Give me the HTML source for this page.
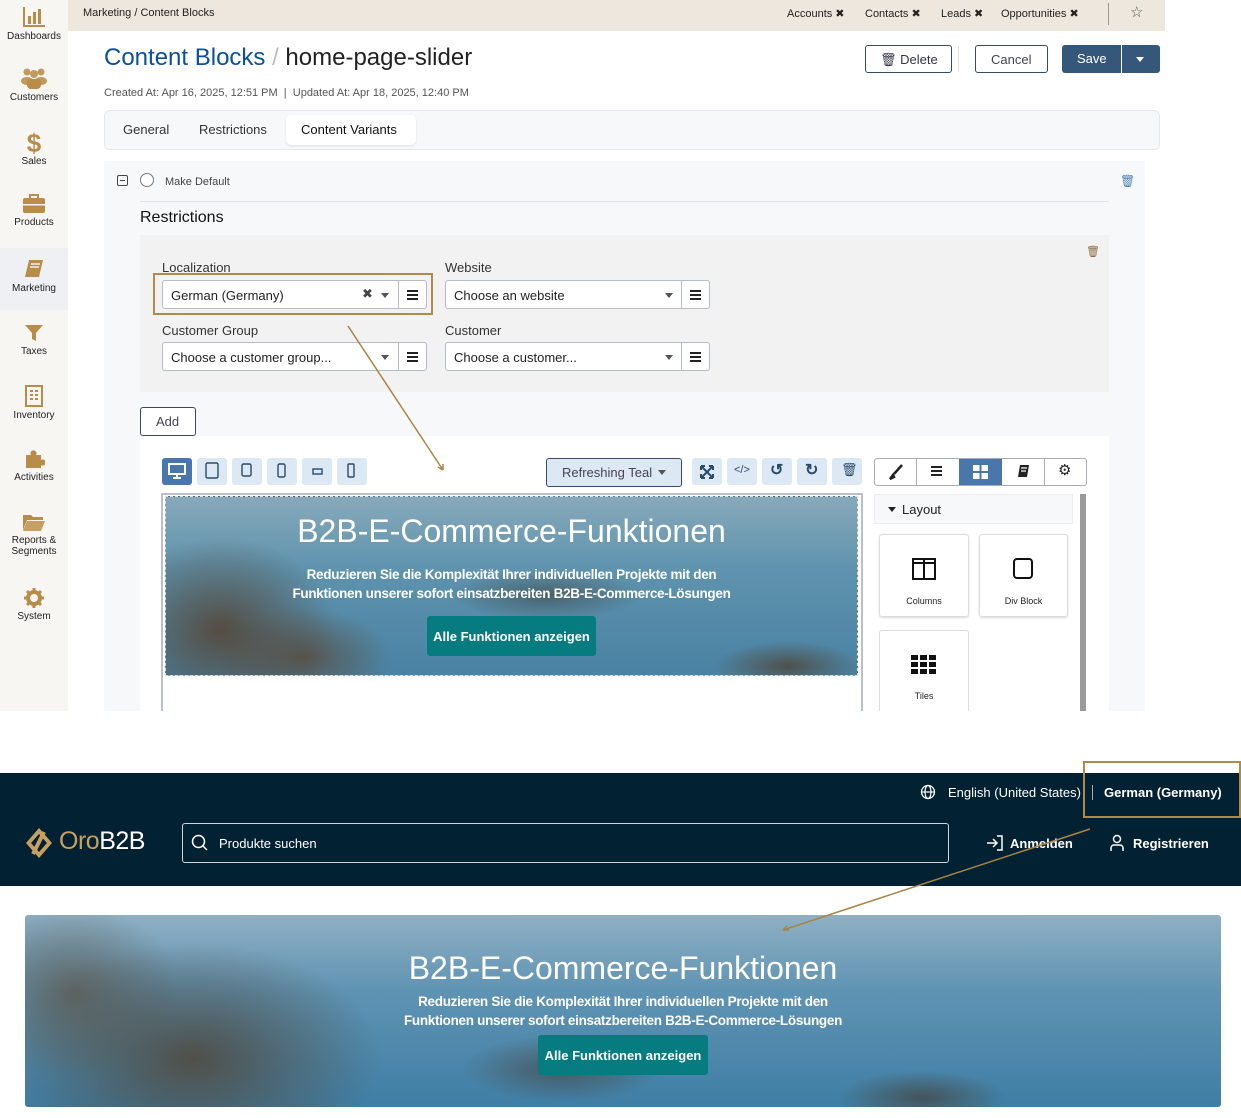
<!DOCTYPE html>
<html><head><meta charset="utf-8"><style>
*{box-sizing:border-box;margin:0;padding:0}
body{width:1241px;height:1118px;position:relative;background:#fff;font-family:"Liberation Sans",sans-serif;color:#222;overflow:hidden}
.a{position:absolute}
.side{left:0;top:0;width:68px;height:711px;background:#f8f6f3}
.si{position:absolute;left:0;width:68px;text-align:center;font-size:10px;color:#222}
.si svg{display:block;margin:0 auto 3px}
.sel{border:1px solid #b4bcc8;border-radius:3px;background:#fff;height:29px;font-size:13px;color:#222}
.sel .t{position:absolute;left:8px;top:7px}
.sel .m{position:absolute;right:0;top:0;width:28px;height:27px;border-left:1px solid #b4bcc8}
.ham{position:absolute;left:8px;width:11px;height:2px;background:#222}
.tri{position:absolute;width:0;height:0;border-left:4px solid transparent;border-right:4px solid transparent;border-top:5px solid #555}
.tb{position:absolute;top:458px;width:30px;height:27px;background:#dde8f5;border-radius:3px}
.sea{background:
radial-gradient(ellipse 22% 70% at 8% 75%,rgba(85,70,55,.9),transparent 75%),
radial-gradient(ellipse 18% 40% at 20% 90%,rgba(90,75,60,.8),transparent 70%),
radial-gradient(ellipse 20% 20% at 55% 55%,rgba(60,60,55,.55),transparent 70%),
radial-gradient(ellipse 15% 20% at 90% 95%,rgba(80,60,40,.7),transparent 70%),
linear-gradient(180deg,#87a9ba 0%,#5f93ae 40%,#4a82a3 100%)}
.cta{position:absolute;background:#067b80;color:#fff;font-weight:bold;font-size:13px;border-radius:3px;text-align:center}
.h1{font-size:32px;color:#fff;line-height:36px;text-align:center}
.sub{text-align:center;font-size:13.5px;color:#fff;font-weight:bold;line-height:19px;letter-spacing:-.3px}
</style></head><body>
<div class="a side"></div>
<div class="a" style="left:0;top:248px;width:68px;height:62px;background:#eef0f3"></div>
<div class="si" style="top:6px"><svg width="24" height="22" viewBox="0 0 24 22"><path d="M2 1v19h21" stroke="#b98c4a" stroke-width="2" fill="none"/><rect x="6" y="10" width="3" height="8" fill="#b98c4a"/><rect x="11" y="6" width="3" height="12" fill="#b98c4a"/><rect x="16" y="3" width="3" height="15" fill="#b98c4a"/></svg>Dashboards</div>
<div class="si" style="top:67px"><svg width="26" height="22" viewBox="0 0 26 22"><circle cx="6" cy="5" r="3.5" fill="#c19a5c"/><circle cx="20" cy="5" r="3.5" fill="#c19a5c"/><circle cx="13" cy="7" r="4" fill="#c19a5c"/><ellipse cx="6" cy="14" rx="6" ry="4" fill="#c19a5c"/><ellipse cx="20" cy="14" rx="6" ry="4" fill="#c19a5c"/><rect x="6" y="12" width="14" height="10" rx="4" fill="#b98c4a"/></svg>Customers</div>
<div class="si" style="top:130px"><div style="font-size:26px;color:#b98c4a;font-weight:bold;line-height:26px">$</div>Sales</div>
<div class="si" style="top:194px"><svg width="24" height="20" viewBox="0 0 24 20"><rect x="1" y="4" width="22" height="15" rx="2" fill="#b98c4a"/><rect x="8" y="1" width="8" height="4" fill="none" stroke="#b98c4a" stroke-width="2"/><rect x="1" y="10" width="22" height="1.5" fill="#f8f6f3"/></svg>Products</div>
<div class="si" style="top:258px"><svg width="22" height="22" viewBox="0 0 22 22"><path d="M6 2h14l-4 17H2z" fill="#b98c4a"/><path d="M8 6h9M7 9h9" stroke="#eef0f3" stroke-width="1.5"/></svg>Marketing</div>
<div class="si" style="top:323px"><svg width="20" height="20" viewBox="0 0 20 20"><path d="M1 2h18l-7 8v8l-4-2v-6z" fill="#b98c4a"/></svg>Taxes</div>
<div class="si" style="top:385px"><svg width="20" height="22" viewBox="0 0 20 22"><rect x="2" y="1" width="16" height="20" fill="none" stroke="#b98c4a" stroke-width="2"/><path d="M6 6h3M11 6h3M6 10h3M11 10h3M6 14h3M11 14h3" stroke="#b98c4a" stroke-width="2"/></svg>Inventory</div>
<div class="si" style="top:447px"><svg width="22" height="22" viewBox="0 0 22 22"><path d="M3 8h5a3 3 0 1 1 5 0h5v5a3 3 0 1 1 0 5v3H3z" fill="#b98c4a"/></svg>Activities</div>
<div class="si" style="top:512px"><svg width="24" height="20" viewBox="0 0 24 20"><path d="M1 3h8l2 2h10v3H5L1 18z" fill="#b98c4a"/><path d="M5 9h18l-4 10H1z" fill="#c7a060"/></svg>Reports &amp;<br>Segments</div>
<div class="si" style="top:588px"><svg width="20" height="20" viewBox="0 0 20 20"><circle cx="10" cy="10" r="6" fill="none" stroke="#b98c4a" stroke-width="4"/><path d="M10 0v5M10 15v5M0 10h5M15 10h5M3 3l3 3M14 14l3 3M3 17l3-3M14 6l3-3" stroke="#b98c4a" stroke-width="3"/></svg>System</div>

<div class="a" style="left:68px;top:0;width:1097px;height:31px;background:#ede7dd"></div>
<div class="a" style="left:83px;top:7px;font-size:11px">Marketing / Content Blocks</div>
<div class="a" style="left:787px;top:7px;font-size:11px">Accounts ✖</div>
<div class="a" style="left:865px;top:7px;font-size:11px">Contacts ✖</div>
<div class="a" style="left:941px;top:7px;font-size:11px">Leads ✖</div>
<div class="a" style="left:1001px;top:7px;font-size:11px">Opportunities ✖</div>
<div class="a" style="left:1108px;top:3px;width:1px;height:22px;background:#999"></div>
<div class="a" style="left:1130px;top:3px;font-size:15px;color:#555">☆</div>
<div class="a" style="left:68px;top:31px;width:1097px;height:680px;background:#fff"></div>

<div class="a" style="left:104px;top:44px;font-size:24px"><span style="color:#0b4f9e">Content Blocks</span> <span style="color:#bbb">/</span> home-page-slider</div>
<div class="a" style="left:104px;top:87px;font-size:11px;color:#555">Created At: Apr 16, 2025, 12:51 PM &nbsp;| &nbsp;Updated At: Apr 18, 2025, 12:40 PM</div>
<div class="a" style="left:865px;top:45px;width:87px;height:28px;border:1px solid #3a4a5a;border-radius:3px;font-size:13px;padding:6px 0 0 14px;color:#334">🗑︎ Delete</div>
<div class="a" style="left:958px;top:46px;width:1px;height:26px;background:#ddd"></div>
<div class="a" style="left:975px;top:45px;width:73px;height:28px;border:1px solid #3a4a5a;border-radius:3px;font-size:13px;padding:6px 0 0 15px;color:#445">Cancel</div>
<div class="a" style="left:1062px;top:45px;width:98px;height:28px;background:#35577a;border-radius:3px;color:#fff;font-size:13px;padding:6px 0 0 15px">Save</div>
<div class="a" style="left:1121px;top:45px;width:1px;height:28px;background:#fff"></div>
<div class="tri" style="left:1136px;top:57px;border-top-color:#fff"></div>

<div class="a" style="left:104px;top:110px;width:1056px;height:40px;background:#f7f8fa;border:1px solid #e6e8ec;border-radius:6px"></div>
<div class="a" style="left:123px;top:122px;font-size:13px;color:#333">General</div>
<div class="a" style="left:199px;top:122px;font-size:13px;color:#333">Restrictions</div>
<div class="a" style="left:286px;top:115px;width:130px;height:30px;background:#fff;border-radius:5px;box-shadow:0 1px 2px rgba(0,0,0,.1);font-size:13px;padding:7px 0 0 15px;color:#111">Content Variants</div>

<div class="a" style="left:104px;top:161px;width:1041px;height:550px;background:#f7f8fa"></div>
<div class="a" style="left:117px;top:175px;width:11px;height:11px;border:1px solid #444;border-radius:2px"><div style="position:absolute;left:2px;top:4px;width:5px;height:1px;background:#444"></div></div>
<div class="a" style="left:140px;top:173px;width:14px;height:14px;border:1px solid #777;border-radius:50%;background:#fff"></div>
<div class="a" style="left:165px;top:176px;font-size:11px;color:#444">Make Default</div>
<div class="a" style="left:1120px;top:174px;font-size:12px;color:#4a7fb5">🗑︎</div>
<div class="a" style="left:140px;top:201px;width:969px;height:1px;background:#dfe2e6"></div>
<div class="a" style="left:140px;top:209px;font-size:16px;color:#111">Restrictions</div>
<div class="a" style="left:140px;top:235px;width:969px;height:157px;background:#f2f2f2"></div>
<div class="a" style="left:1086px;top:245px;font-size:11px;color:#8a6a3a">🗑︎</div>

<div class="a" style="left:162px;top:260px;font-size:13px;color:#333">Localization</div>
<div class="a" style="left:445px;top:260px;font-size:13px;color:#333">Website</div>
<div class="a" style="left:162px;top:323px;font-size:13px;color:#333">Customer Group</div>
<div class="a" style="left:445px;top:323px;font-size:13px;color:#333">Customer</div>
<div class="a" style="left:153px;top:273px;width:280px;height:42px;border:2px solid #b08a4a"></div>

<div class="a sel" style="left:162px;top:280px;width:265px"><span class="t">German (Germany)</span><span class="a" style="left:199px;top:5px;font-size:13px;color:#444">✖</span><div class="tri" style="left:218px;top:12px"></div><div class="m"><div class="ham" style="top:9px"></div><div class="ham" style="top:13px"></div><div class="ham" style="top:17px"></div></div></div>
<div class="a sel" style="left:445px;top:280px;width:265px"><span class="t">Choose an website</span><div class="tri" style="left:219px;top:12px"></div><div class="m"><div class="ham" style="top:9px"></div><div class="ham" style="top:13px"></div><div class="ham" style="top:17px"></div></div></div>
<div class="a sel" style="left:162px;top:342px;width:265px"><span class="t">Choose a customer group...</span><div class="tri" style="left:218px;top:12px"></div><div class="m"><div class="ham" style="top:9px"></div><div class="ham" style="top:13px"></div><div class="ham" style="top:17px"></div></div></div>
<div class="a sel" style="left:445px;top:342px;width:265px"><span class="t">Choose a customer...</span><div class="tri" style="left:219px;top:12px"></div><div class="m"><div class="ham" style="top:9px"></div><div class="ham" style="top:13px"></div><div class="ham" style="top:17px"></div></div></div>

<div class="a" style="left:140px;top:407px;width:56px;height:29px;border:1px solid #3a4a5a;border-radius:3px;background:#fff;font-size:13px;padding:6px 0 0 15px;color:#445">Add</div>

<div class="a" style="left:140px;top:436px;width:969px;height:275px;background:#fff"></div>
<div class="tb" style="left:162px;background:#4a77ab"></div>
<div class="tb" style="left:197px"></div><div class="tb" style="left:232px"></div><div class="tb" style="left:267px"></div><div class="tb" style="left:302px"></div><div class="tb" style="left:337px"></div>
<svg class="a" style="left:168px;top:463px" width="18" height="16"><rect x="1" y="1" width="16" height="10" fill="none" stroke="#fff" stroke-width="2"/><path d="M9 11v3M5 15h8" stroke="#fff" stroke-width="2"/></svg>
<svg class="a" style="left:205px;top:462px" width="14" height="18"><rect x="1" y="1" width="12" height="15" rx="1.5" fill="none" stroke="#2a4a6a" stroke-width="1.4"/></svg>
<svg class="a" style="left:241px;top:463px" width="12" height="16"><rect x="1" y="1" width="9" height="12" rx="1.5" fill="none" stroke="#2a4a6a" stroke-width="1.4"/></svg>
<svg class="a" style="left:277px;top:463px" width="10" height="16"><rect x="1" y="1" width="7" height="13" rx="1.5" fill="none" stroke="#2a4a6a" stroke-width="1.4"/></svg>
<svg class="a" style="left:312px;top:468px" width="12" height="8"><rect x="1" y="1" width="9" height="5" fill="none" stroke="#2a4a6a" stroke-width="1.4"/></svg>
<svg class="a" style="left:347px;top:463px" width="10" height="16"><rect x="1" y="1" width="6" height="13" rx="1" fill="none" stroke="#2a4a6a" stroke-width="1.4"/></svg>

<div class="a" style="left:546px;top:458px;width:136px;height:29px;background:#dde8f5;border:1px solid #3a4a6a;border-radius:3px;font-size:13px;padding:6px 0 0 15px;color:#445">Refreshing Teal</div>
<div class="tri" style="left:658px;top:470px"></div>
<div class="tb" style="left:692px"></div><div class="tb" style="left:727px"></div><div class="tb" style="left:762px"></div><div class="tb" style="left:797px"></div><div class="tb" style="left:832px"></div>
<svg class="a" style="left:699px;top:464px" width="16" height="16"><path d="M2 2l12 12M14 2L2 14M2 2h4M2 2v4M14 2h-4M14 2v4M2 14h4M2 14v-4M14 14h-4M14 14v-4" stroke="#2a4a6a" stroke-width="2"/></svg>
<div class="a" style="left:734px;top:464px;font-size:11px;color:#2a4a6a">&lt;/&gt;</div>
<div class="a" style="left:770px;top:460px;font-size:16px;color:#2a4a6a;font-weight:bold">↺</div>
<div class="a" style="left:805px;top:460px;font-size:16px;color:#2a4a6a;font-weight:bold">↻</div>
<div class="a" style="left:841px;top:462px;font-size:13px;color:#2a4a6a">🗑︎</div>

<div class="a" style="left:874px;top:458px;width:213px;height:28px;border:1px solid #aab;border-radius:3px;background:#fff"></div>
<div class="a" style="left:959px;top:459px;width:43px;height:26px;background:#4a77ab"></div>
<div class="a" style="left:916px;top:459px;width:1px;height:26px;background:#aab"></div>
<div class="a" style="left:1044px;top:459px;width:1px;height:26px;background:#aab"></div>
<svg class="a" style="left:888px;top:464px" width="16" height="16"><path d="M14 1L6 10M5 11l-3 4 4-2z" stroke="#222" stroke-width="2.5"/></svg>
<div class="a" style="left:931px;top:461px;width:13px"><div class="ham" style="left:0;top:5px"></div><div class="ham" style="left:0;top:9px"></div><div class="ham" style="left:0;top:13px"></div></div>
<svg class="a" style="left:973px;top:465px" width="15" height="14"><rect x="0" y="0" width="15" height="14" fill="#fff"/><path d="M7.5 0v14M0 7h15" stroke="#4a77ab" stroke-width="2"/></svg>
<svg class="a" style="left:1016px;top:464px" width="14" height="15"><path d="M4 1h9l-2 12H2z" fill="#222"/><path d="M5 4h6M5 7h5" stroke="#fff" stroke-width="1.2"/></svg>
<div class="a" style="left:1058px;top:461px;font-size:15px;color:#222">⚙︎</div>

<div class="a" style="left:874px;top:494px;width:199px;height:30px;background:#f7f8fa;border:1px solid #eee"></div>
<div class="tri" style="left:888px;top:507px;border-top-color:#222"></div>
<div class="a" style="left:902px;top:502px;font-size:13px;color:#222">Layout</div>
<div class="a" style="left:1080px;top:494px;width:6px;height:217px;background:#9a9a9a"></div>
<div class="a" style="left:879px;top:534px;width:90px;height:83px;border:1px solid #ddd;border-radius:3px;box-shadow:0 1px 2px rgba(0,0,0,.15)"></div>
<div class="a" style="left:979px;top:534px;width:89px;height:83px;border:1px solid #ddd;border-radius:3px;box-shadow:0 1px 2px rgba(0,0,0,.15)"></div>
<div class="a" style="left:879px;top:630px;width:90px;height:81px;border:1px solid #ddd;border-bottom:none;border-radius:3px 3px 0 0"></div>
<svg class="a" style="left:912px;top:558px" width="24" height="22"><rect x="1" y="1" width="22" height="20" fill="none" stroke="#111" stroke-width="2"/><path d="M12 1v20M1 5h22" stroke="#111" stroke-width="2"/></svg>
<svg class="a" style="left:1013px;top:558px" width="20" height="22"><rect x="1" y="1" width="18" height="19" rx="3" fill="none" stroke="#111" stroke-width="2"/></svg>
<svg class="a" style="left:911px;top:655px" width="26" height="20"><g fill="#111"><rect x="0" y="0" width="7" height="5"/><rect x="9" y="0" width="7" height="5"/><rect x="18" y="0" width="7" height="5"/><rect x="0" y="7" width="7" height="5"/><rect x="9" y="7" width="7" height="5"/><rect x="18" y="7" width="7" height="5"/><rect x="0" y="14" width="7" height="5"/><rect x="9" y="14" width="7" height="5"/><rect x="18" y="14" width="7" height="5"/></g></svg>
<div class="a" style="left:879px;top:596px;width:90px;text-align:center;font-size:9px">Columns</div>
<div class="a" style="left:979px;top:596px;width:89px;text-align:center;font-size:9px">Div Block</div>
<div class="a" style="left:879px;top:691px;width:90px;text-align:center;font-size:9px">Tiles</div>

<div class="a" style="left:161px;top:493px;width:702px;height:218px;border:2px solid #b9c0cc;border-bottom:none"></div>
<div class="a sea" style="left:165px;top:496px;width:693px;height:180px;border:1px dashed #ddd"></div>
<div class="a h1" style="left:165px;top:513px;width:693px">B2B-E-Commerce-Funktionen</div>
<div class="a sub" style="left:165px;top:565px;width:693px">Reduzieren Sie die Komplexität Ihrer individuellen Projekte mit den<br>Funktionen unserer sofort einsatzbereiten B2B-E-Commerce-Lösungen</div>
<div class="cta" style="left:427px;top:616px;width:169px;height:40px;padding-top:13px">Alle Funktionen anzeigen</div>

<svg class="a" style="left:0;top:0" width="1241" height="1118"><path d="M348 326L443 470" stroke="#a88445" stroke-width="1.5"/><path d="M443 470l-5-3M443 470l0-6" stroke="#a88445" stroke-width="1.5"/></svg>

<div class="a" style="left:0;top:773px;width:1241px;height:113px;background:#022133"></div>
<svg class="a" style="left:920px;top:784px" width="16" height="16"><circle cx="8" cy="8" r="6.5" fill="none" stroke="#fff" stroke-width="1.3"/><ellipse cx="8" cy="8" rx="3" ry="6.5" fill="none" stroke="#fff" stroke-width="1.2"/><path d="M1.5 8h13" stroke="#fff" stroke-width="1.2"/></svg>
<div class="a" style="left:948px;top:785px;font-size:13px;color:#fff">English (United States)</div>
<div class="a" style="left:1092px;top:785px;width:1px;height:15px;background:#aaa"></div>
<div class="a" style="left:1104px;top:785px;font-size:13px;color:#fff;font-weight:bold">German (Germany)</div>
<div class="a" style="left:1083px;top:761px;width:158px;height:57px;border:2px solid #b08a4a"></div>
<svg class="a" style="left:24px;top:827px" width="30" height="32"><path d="M15 1L28 16 15 31 2 16z" fill="#c7a060"/><path d="M15 7L23 16 15 25 7 16z" fill="#022133"/><path d="M20 5L9 27" stroke="#c7a060" stroke-width="4"/></svg>
<div class="a" style="left:59px;top:827px;font-size:25px;color:#c7a060;letter-spacing:-.5px">Oro<span style="color:#fff">B2B</span></div>
<div class="a" style="left:182px;top:823px;width:767px;height:40px;border:1px solid #cfd6dc;border-radius:3px"></div>
<svg class="a" style="left:191px;top:834px" width="18" height="18"><circle cx="7.5" cy="7.5" r="6" fill="none" stroke="#fff" stroke-width="1.5"/><path d="M12 12l4 4" stroke="#fff" stroke-width="1.5"/></svg>
<div class="a" style="left:219px;top:836px;font-size:13px;color:#fff">Produkte suchen</div>
<svg class="a" style="left:986px;top:834px" width="18" height="18"><path d="M1 9h9M7 5l4 4-4 4M11 2h5v14h-5" fill="none" stroke="#fff" stroke-width="1.5"/></svg>
<div class="a" style="left:1010px;top:836px;font-size:13px;color:#fff;font-weight:bold">Anmelden</div>
<svg class="a" style="left:1109px;top:834px" width="16" height="18"><circle cx="8" cy="5" r="3.5" fill="none" stroke="#fff" stroke-width="1.5"/><path d="M2 17v-3a3 3 0 0 1 3-3h6a3 3 0 0 1 3 3v3" fill="none" stroke="#fff" stroke-width="1.5"/></svg>
<div class="a" style="left:1133px;top:836px;font-size:13px;color:#fff;font-weight:bold">Registrieren</div>

<div class="a" style="left:25px;top:915px;width:1196px;height:192px;border-radius:3px;background:
radial-gradient(ellipse 22% 85% at 14% 75%,rgba(80,75,65,.92),transparent 72%),
radial-gradient(ellipse 12% 60% at 4% 40%,rgba(95,95,88,.85),transparent 75%),
radial-gradient(ellipse 12% 25% at 45% 80%,rgba(70,60,50,.6),transparent 70%),
radial-gradient(ellipse 10% 20% at 75% 95%,rgba(70,55,40,.6),transparent 70%),
linear-gradient(180deg,#8fb0c4 0%,#5f93b3 40%,#3f7ea5 100%)"></div>
<div class="a h1" style="left:25px;top:950px;width:1196px">B2B-E-Commerce-Funktionen</div>
<div class="a sub" style="left:25px;top:992px;width:1196px">Reduzieren Sie die Komplexität Ihrer individuellen Projekte mit den<br>Funktionen unserer sofort einsatzbereiten B2B-E-Commerce-Lösungen</div>
<div class="cta" style="left:538px;top:1035px;width:170px;height:40px;padding-top:13px">Alle Funktionen anzeigen</div>

<svg class="a" style="left:0;top:0" width="1241" height="1118"><path d="M1090 829L783 930" stroke="#a88445" stroke-width="1.5"/><path d="M783 930l6 0M783 930l4-4" stroke="#a88445" stroke-width="1.5"/></svg>
</body></html>
